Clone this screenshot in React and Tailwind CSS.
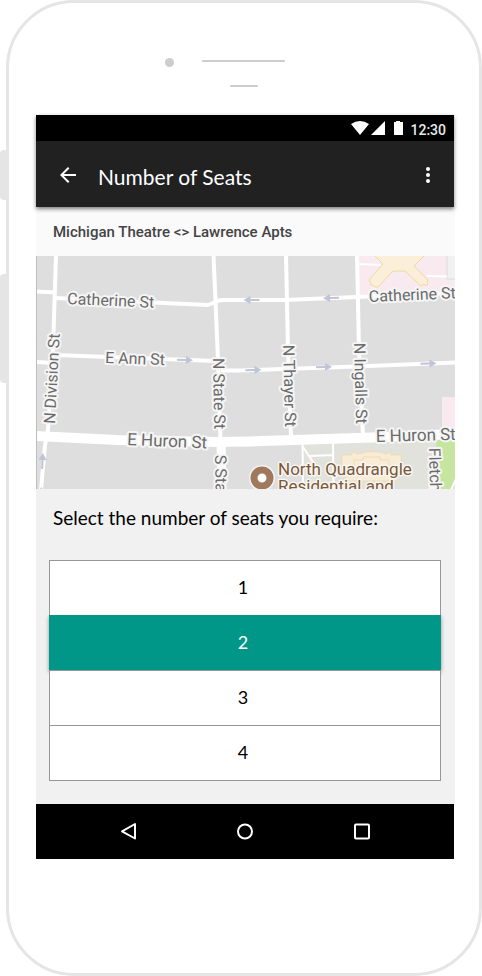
import { useState } from "react";

const ROADS = [
  { d: "M36 291.500 L55 292.500", w: 4 },
  { d: "M55 298 L208 305 L213 303 Q217 300 223 300 L285 300 L357 297 L456 293", w: 4 },
  { d: "M36 362 L54 363 M55 355 L216 361", w: 4 },
  { d: "M221 370.500 L240 370.500 L357 366.500 L456 362.500", w: 4 },
  { d: "M56 255 L53 350 L48 430 L45 445 L41 490", w: 4 },
  { d: "M213.500 255 L218 360 L220.500 440", w: 4 },
  { d: "M286 255 L288 350 L291 438", w: 4 },
  { d: "M357 255 L359 350 L363 436", w: 4 },
  { d: "M35 436 L117 440 L217 442 L250 441.500 L373 437.500 L456 434", w: 10 },
  { d: "M221 442 L222 490", w: 9 },
  { d: "M302.500 443 L303 490 M303 447 L319 471 M310 456 L333 455 M333 441 L333.500 490", w: 2 },
];

const LABELS = [
  { text: "Catherine St", x: 67, y: 304, angle: 2.5, size: 16 },
  { text: "Catherine St", x: 369, y: 302, angle: -2.5, size: 16 },
  { text: "E Ann St", x: 105, y: 363, angle: 2, size: 16 },
  { text: "E Huron St", x: 127, y: 445, angle: 2.5, size: 17 },
  { text: "E Huron St", x: 376, y: 442, angle: -1.5, size: 17 },
  { text: "N Division St", x: 55, y: 424, angle: -87, size: 16 },
  { text: "N State St", x: 213, y: 358, angle: 89, size: 16 },
  { text: "S State St", x: 215, y: 455, angle: 89, size: 16 },
  { text: "N Thayer St", x: 283, y: 345, angle: 88.5, size: 16 },
  { text: "N Ingalls St", x: 354, y: 343, angle: 88.5, size: 16 },
  { text: "Fletcher St", x: 429, y: 448, angle: 88.5, size: 16 },
];

const ARROWS = [
  { x: 185, y: 360, angle: 2 },
  { x: 251.5, y: 300, angle: 180 },
  { x: 331, y: 298, angle: 179 },
  { x: 253.5, y: 370, angle: -1 },
  { x: 324, y: 367, angle: -1 },
  { x: 428.5, y: 363.5, angle: -2 },
  { x: 42.5, y: 461, angle: -87 },
  { x: 41, y: 495, angle: -87 },
];

function RouteMap() {
  return (
    <svg
      viewBox="36 256 419 233"
      preserveAspectRatio="xMidYMid slice"
      role="img"
      aria-label="Route map"
      className="block h-[233px] w-full bg-[#dedede]"
    >
      <path d="M302 442 L437 438 L456 436 V490 H302 Z" fill="#e1e2dc" />
      <path d="M357 255 H456 V293 L357 297 Z" fill="#f8eaee" />
      <path d="M442 397 H456 V434 H442 Z" fill="#f8eaee" />
      <path d="M436 440 H456 V479 L451 490 H439 L436 478 Z" fill="#c6e5a0" />
      <path d="M456 479 L451 490" stroke="#fff" strokeWidth="2" />
      <path d="M447 250 H460 V279 H447 Z" fill="#f1f1f1" stroke="#dcdcdc" />
      <path d="M358 264 L381 265 M427 276 L447 276.500" stroke="#fff" strokeWidth="2" />
      <path
        d="M374 255 L383 264 L369 280 L371 283 L370 285 L373 285 L375 287 L378 287 L393 271 L405 271 L421 286 L424 284 L426 286 L428 284 L427 283 L428 280 L414 266 L425 255 Z"
        fill="#fcefda"
        stroke="#f0d8a4"
      />
      <g fill="none" stroke="#fff">
        {ROADS.map((road) => (
          <path key={road.d} d={road.d} strokeWidth={road.w} />
        ))}
      </g>
      <g fill="#f8ecd6" stroke="#f0dcb0">
        <path d="M342 455 H352 V452 L358 454 Q373 449 386 454 L391 452 V455 H401 V472 H397 V481 H346 V472 H342 Z" />
        <path d="M354 460 H363 V457 H380 V460 H389 V474 H354 Z" fill="none" />
      </g>
      {ARROWS.map((arrow) => (
        <path
          key={`${arrow.x}-${arrow.y}`}
          d="M-8 -1 H1 V-4 L8 0 L1 4 V1 H-8 Z"
          fill="#c0c4d7"
          transform={`translate(${arrow.x} ${arrow.y}) rotate(${arrow.angle})`}
        />
      ))}
      <g
        className="font-[Roboto,sans-serif] [paint-order:stroke]"
        fill="#6b6b6b"
        stroke="#f5f5f5"
        strokeWidth="4"
        strokeLinejoin="round"
      >
        {LABELS.map((label) => (
          <text
            key={`${label.x}-${label.y}`}
            fontSize={label.size}
            transform={`translate(${label.x} ${label.y}) rotate(${label.angle})`}
          >
            {label.text}
          </text>
        ))}
      </g>
      <circle cx="262" cy="478" r="13" fill="#f5f5f5" />
      <circle cx="262" cy="478" r="8" fill="#fff" stroke="#a0785c" strokeWidth="7" />
      <g
        className="font-[Roboto,sans-serif] text-[17px] [paint-order:stroke]"
        fill="#7b5838"
        stroke="#f8f6f2"
        strokeWidth="3"
        strokeLinejoin="round"
      >
        <text x="278" y="475">North Quadrangle</text>
        <text x="278" y="492">Residential and</text>
      </g>
      <path d="M36.500 256 V489" stroke="#bdbdbd" />
    </svg>
  );
}

function StatusBar() {
  return (
    <div className="flex h-[26px] items-center justify-end bg-black pr-2 text-white">
      <svg viewBox="0 0 52 14" className="h-[14px] w-[52px]" fill="#fff" aria-hidden="true">
        <path d="M0 3 Q9 -3 18 3 L9 14 Z" />
        <path d="M34 0 V14 H20 Z" />
        <path d="M43 1 H45 V0 H49 V1 H52 V14 H43 Z" />
      </svg>
      <span className="ml-[7px] pt-1 font-[Roboto,sans-serif] text-[14px] font-medium leading-5 text-[#e8e8e8]">
        12:30
      </span>
    </div>
  );
}

function AppBar() {
  return (
    <header className="flex h-[66px] items-center bg-[#212121] pl-5 pr-3 pt-[2px] text-white">
      <button type="button" aria-label="Back" className="flex size-6 items-center justify-center">
        <svg viewBox="0 0 24 24" className="size-6" fill="#fff" aria-hidden="true">
          <path d="M20 11H7.830l5.590-5.590L12 4l-8 8 8 8 1.410-1.410L7.830 13H20v-2z" />
        </svg>
      </button>
      <h1 className="ml-[18px] flex-1 pt-1 font-[Lato,sans-serif] text-[21px] leading-6">
        Number of Seats
      </h1>
      <button type="button" aria-label="More options" className="flex size-7 items-center justify-center">
        <svg viewBox="0 0 24 24" className="size-6" fill="#fff" aria-hidden="true">
          <circle cx="12" cy="6" r="2" />
          <circle cx="12" cy="12" r="2" />
          <circle cx="12" cy="18" r="2" />
        </svg>
      </button>
    </header>
  );
}

function SeatPicker() {
  const [seats, setSeats] = useState(2);
  return (
    <section className="bg-[#f1f1f1] pb-[23px] pl-[13px] pr-[14px] pt-[17px] font-[Lato,sans-serif] leading-6 text-black">
      <h2 id="seats-label" className="px-1 text-[19px]">
        Select the number of seats you require:
      </h2>
      <div
        role="group"
        aria-labelledby="seats-label"
        className="mt-[30px] flex flex-col border-b border-[#979797] text-[18px]"
      >
        {[1, 2, 3, 4].map((n) => (
          <button
            key={n}
            type="button"
            aria-pressed={seats === n}
            onClick={() => setSeats(n)}
            className={
              seats === n
                ? "h-[55px] bg-[#009688] pb-[2px] pr-1 text-white shadow-[0_2px_4px_rgba(0,0,0,0.4)]"
                : "relative h-[55px] border-x border-t border-[#979797] bg-white pb-[2px] pr-1"
            }
          >
            {n}
          </button>
        ))}
      </div>
    </section>
  );
}

function NavBar() {
  return (
    <nav className="flex h-[55px] items-center justify-between bg-black px-20">
      <button type="button" aria-label="Back" className="flex size-6 items-center justify-center">
        <svg viewBox="0 0 24 24" className="size-6" fill="none" stroke="#fff" strokeWidth="2" strokeLinejoin="round" aria-hidden="true">
          <path d="M19 4 V18.500 L6 11.300 Z" />
        </svg>
      </button>
      <button type="button" aria-label="Home" className="flex size-6 items-center justify-center">
        <svg viewBox="0 0 24 24" className="size-6" fill="none" stroke="#fff" strokeWidth="2" aria-hidden="true">
          <circle cx="12" cy="11.500" r="7" />
        </svg>
      </button>
      <button type="button" aria-label="Overview" className="flex size-6 items-center justify-center">
        <svg viewBox="0 0 24 24" className="size-6" fill="none" stroke="#fff" strokeWidth="2" aria-hidden="true">
          <rect x="5" y="4.500" width="14" height="14" rx="1" />
        </svg>
      </button>
    </nav>
  );
}

export default function App() {
  return (
    <div className="flex bg-white">
      <div className="w-[6px] shrink-0 pt-[150px]" aria-hidden="true">
        <div className="h-[50px] rounded-l-sm bg-[#e5e5e5]" />
        <div className="mt-[74px] h-[109px] rounded-l-sm bg-[#e5e5e5]" />
      </div>
      <div className="min-w-0 flex-1 rounded-[68px] border-[3px] border-[#e5e5e5] pb-[114px] pl-[27px] pr-6">
        <div className="flex h-28 flex-col items-center pr-1 pt-[55px]" aria-hidden="true">
          <div className="flex gap-7 pr-[37px]">
            <div className="size-[9px] rounded-full bg-[#cdcdcd]" />
            <div className="mt-[2px] h-[2px] w-[83px] rounded-full bg-[#cdcdcd]" />
          </div>
          <div className="mt-[18px] h-[2px] w-7 rounded-full bg-[#cdcdcd]" />
        </div>
        <div className="relative mr-px shadow-[0_2px_4px_rgba(0,0,0,0.5)]">
          <StatusBar />
          <AppBar />
        </div>
        <main>
          <p className="bg-[#fafafa] px-[17px] pb-[14px] pt-[15px] font-[Roboto,sans-serif] text-[15px] font-medium leading-5 text-[#444]">
            Michigan Theatre &lt;&gt; Lawrence Apts
          </p>
          <RouteMap />
          <SeatPicker />
        </main>
        <div className="mr-px">
          <NavBar />
        </div>
      </div>
    </div>
  );
}
